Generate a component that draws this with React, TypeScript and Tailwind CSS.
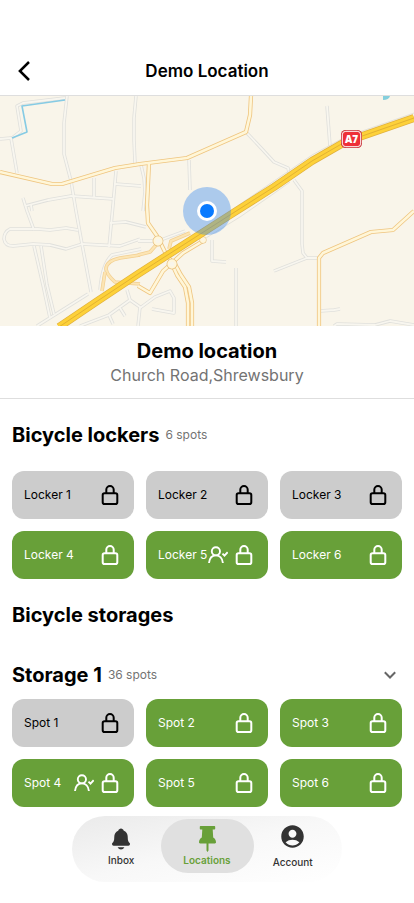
import React from "react";
import { IoNotifications } from "react-icons/io5";
import { MdAccountCircle } from "react-icons/md";

type Spot = { name: string; taken?: boolean; mine?: boolean };

const lockers: Spot[] = [
  { name: "Locker 1", taken: true },
  { name: "Locker 2", taken: true },
  { name: "Locker 3", taken: true },
  { name: "Locker 4" },
  { name: "Locker 5", mine: true },
  { name: "Locker 6" },
];

const spots: Spot[] = [
  { name: "Spot 1", taken: true },
  { name: "Spot 2" },
  { name: "Spot 3" },
  { name: "Spot 4", mine: true },
  { name: "Spot 5" },
  { name: "Spot 6" },
];

const lanes = [
  "M67 96L64 123V154L71 181L76 211L82 244L91 292",
  "M0 139L11 138L17 173",
  "M12 138L21 131L17 106L23 103L65 98",
  "M136 96L134 118V140L135 163",
  "M116 171L113 205L109 247",
  "M115 184L141 186",
  "M94 178V197",
  "M23 198L27 211L34 230",
  "M31 205L32 211",
  "M25 206L48 200L71 196L114 199",
  "M246 132L262 149L274 162L288 168L289 173",
  "M189 160L190 190",
  "M141 165L144 178L145 192L143 211",
  "M327 106L330 146",
  "M294 180L302 191V244L303 253L307 258L318 258",
  "M307 258L274 271",
  "M78 230L66 228L50 230L38 229L10 229Q4 232 4 239Q5 246 13 246L33 244L50 245L66 249L82 244L120 246L140 239",
  "M34 246L43 285L50 318",
  "M41 246L47 285L54 314",
  "M110 223L126 222L146 227",
  "M37 326L88 294",
  "M100 290Q102 264 112 255L141 249",
  "M80 326L109 315L130 300L127 290",
  "M109 315L113 324M120 308L125 316M130 300L140 307L138 326",
  "M140 308L155 297L170 291L174 298V313L152 309",
  "M212 240L212 261L226 262",
  "M236 268V326",
  "M320 311L334 310L340 309",
  "M334 326L337 324L375 325L390 321L414 325",
  "M138 241L158 241L185 231",
];

const streets = [
  "M0 172L52 184H62L115 168L140 164L187 158L246 132L250 115L251 96",
  "M149 163L147 205L148 223L157 236L166 254L172 262",
  "M319 326V258L323 253L371 232L393 230L414 211",
  "M203 241L183 253L172 263L163 271L150 293L138 286",
  "M172 264L177 275L185 287L188 303V326",
  "M175 264L181 275L189 287L192 303V326",
];

const ramps = [
  "M140 255L120 258Q106 261 106 269Q107 275 115 282L140 284",
  "M105 272L102 291",
  "M138 255L150 252L157 244",
  "M169 249L171 241L190 233",
];

const highway = "M59 327L96 302L138 274L230 215L274 187L312 161L345 142L414 118";

function Casing({ d, edge, fill, outer, inner }: { d: string; edge: string; fill: string; outer: number; inner: number }) {
  return (
    <>
      <path d={d} stroke={edge} strokeWidth={outer} />
      <path d={d} stroke={fill} strokeWidth={inner} />
    </>
  );
}

function LocationMap() {
  return (
    <svg
      className="block h-[230px] w-full"
      viewBox="0 96 414 230"
      preserveAspectRatio="xMidYMid slice"
      fill="none"
      strokeLinejoin="round"
      role="img"
      aria-label="Map of Church Road, Shrewsbury"
    >
      <rect y="96" width="414" height="230" fill="#f9f5ea" />
      <path d="M383 96H390Q389 100 383 100Z" fill="#84cfdd" />
      <g>
        {lanes.map((d) => (
          <path key={d} d={d} stroke="#e0e0dc" strokeWidth={3.4} />
        ))}
        {lanes.map((d) => (
          <path key={d} d={d} stroke="#f8f6ef" strokeWidth={1.8} />
        ))}
      </g>
      <path d="M65 100L22 106L27 132L12 138" stroke="#86cbe4" strokeWidth={1.6} />
      {ramps.map((d) => (
        <Casing key={d} d={d} edge="#f2cf91" fill="#fce5b4" outer={3.6} inner={2.2} />
      ))}
      <g>
        {streets.map((d) => (
          <path key={d} d={d} stroke="#efc57f" strokeWidth={4.2} />
        ))}
        {streets.map((d) => (
          <path key={d} d={d} stroke="#fff6d8" strokeWidth={2.6} />
        ))}
      </g>
      <g fill="#f9f5ea">
        <circle cx="158" cy="241" r="3.6" stroke="#e6bd78" strokeWidth={3.6} />
        <circle cx="158" cy="241" r="3.6" stroke="#fff6da" strokeWidth={2.2} />
        <circle cx="203" cy="240" r="2" stroke="#e6bd78" strokeWidth={3} />
        <circle cx="203" cy="240" r="2" stroke="#fff6da" strokeWidth={2} />
      </g>
      <path d="M230 211L274 181L312 155L345 137L414 113" stroke="#deddd6" strokeWidth={0.8} />
      <path d="M206 238L240 217L276 192L290 182" stroke="#deddd6" strokeWidth={0.8} />
      <path d={highway} stroke="#e0b03e" strokeWidth={8} />
      <path d={highway} stroke="#fdd13a" strokeWidth={6.6} />
      <path d={highway} stroke="#dfae32" strokeWidth={0.9} />
      <g fill="#f9f5ea">
        <circle cx="172" cy="264" r="3.6" stroke="#e6bd78" strokeWidth={3.6} />
        <circle cx="172" cy="264" r="3.6" stroke="#fff6da" strokeWidth={2.2} />
      </g>
      <circle cx="207" cy="211" r="24" fill="#3a8af0" fillOpacity="0.4" />
      <circle cx="207" cy="211" r="10" fill="#fff" />
      <circle cx="207" cy="211" r="7" fill="#087aff" />
      <rect x="341" y="130" width="21" height="18" rx="4.5" fill="#c9353b" />
      <rect x="342.300" y="131.300" width="18.400" height="15.400" rx="3.500" fill="#ee2f38" stroke="#fff" strokeWidth="1" />
      <text
        x="351.5"
        y="143"
        textAnchor="middle"
        fill="#fff"
        className="font-['Open_Sans',sans-serif] text-[10px] font-extrabold"
      >
        A7
      </text>
    </svg>
  );
}

function LockIcon() {
  return (
    <svg className="size-6 shrink-0" viewBox="0 0 24 24" fill="none" stroke="currentColor" strokeWidth="2" aria-hidden="true">
      <rect x="4.7" y="10.2" width="14.6" height="10.8" rx="1.8" />
      <path d="M8.3 10.2V6.7a3.7 3.7 0 0 1 7.4 0v3.5" />
    </svg>
  );
}

function UserCheckIcon() {
  return (
    <svg
      className="size-5 shrink-0"
      viewBox="0 0 20 20"
      fill="none"
      stroke="currentColor"
      strokeWidth="1.9"
      aria-hidden="true"
    >
      <circle cx="7.9" cy="6.300" r="4.100" />
      <path d="M1 18c.5-4.600 3.200-7.600 6.900-7.600s6.500 3 7 7.600" />
      <path d="M14.500 8.700l2 2 3.200-3.500" />
    </svg>
  );
}

function PinIcon() {
  return (
    <svg className="h-[26px] w-[17px]" viewBox="0 0 17 26" fill="currentColor" aria-hidden="true">
      <path d="M1.800 0h13.400c.7 0 1 .4 1 1v1.500c0 .6-.4 1-1 1h-1.500l.5 8c1.700 1 2.800 2.700 2.800 4.700 0 .7-.4 1.200-1.100 1.200H9.500v7L8.500 26l-1-1.600v-7H1.100C.4 17.400 0 16.900 0 16.200c0-2 1.100-3.700 2.800-4.700l.5-8H1.800c-.6 0-1-.4-1-1V1c0-.6.4-1 1-1z" />
    </svg>
  );
}

function SpotGrid({ items }: { items: Spot[] }) {
  return (
    <div className="grid grid-cols-3 gap-3">
      {items.map((item) => (
        <button
          key={item.name}
          type="button"
          className={`flex h-12 min-w-0 items-center justify-between rounded-xl px-3 text-xs ${
            item.taken ? "bg-[#cccccc] text-black" : "bg-[#68a039] text-white"
          }`}
        >
          <span className="whitespace-nowrap">{item.name}</span>
          <span className="flex items-center gap-1">
            {item.mine && <UserCheckIcon />}
            <LockIcon />
          </span>
        </button>
      ))}
    </div>
  );
}

export default function App() {
  return (
    <div className="flex min-h-screen flex-col bg-white font-['Inter',sans-serif] text-black">
      <header className="grid h-24 grid-cols-[48px_1fr_48px] items-center border-b border-[#dedede] pt-[46px]">
        <button type="button" aria-label="Back" className="flex h-10 items-center justify-center">
          <svg className="h-5 w-3" viewBox="0 0 12 20" fill="none" stroke="currentColor" strokeWidth="2.5" aria-hidden="true">
            <path d="M11 1L1.900 10l9.100 9" />
          </svg>
        </button>
        <h1 className="text-center text-[17px] leading-6 font-semibold">Demo Location</h1>
      </header>

      <LocationMap />

      <section className="border-b border-[#dedede] py-3 text-center">
        <h2 className="text-xl leading-[26px] font-bold">Demo location</h2>
        <p className="text-base leading-[22px] text-[#737373]">Church Road,Shrewsbury</p>
      </section>

      <main className="px-3 pt-6">
        <div className="mb-6 flex items-center gap-1.5">
          <h2 className="text-xl leading-6 font-bold">Bicycle lockers</h2>
          <span className="text-xs text-[#737373]">6 spots</span>
        </div>
        <SpotGrid items={lockers} />

        <h2 className="mt-6 text-xl leading-6 font-bold">Bicycle storages</h2>

        <div className="mt-9 mb-3 flex items-center gap-1.5">
          <h3 className="text-xl leading-6 font-bold">Storage 1</h3>
          <span className="text-xs text-[#737373]">36 spots</span>
          <button type="button" aria-label="Collapse Storage 1" className="ml-auto flex size-6 items-center justify-center text-[#666666]">
            <svg className="h-2 w-3" viewBox="0 0 12 8" fill="none" stroke="currentColor" strokeWidth="2" aria-hidden="true">
              <path d="M.8 1.300L6 6.500l5.200-5.200" />
            </svg>
          </button>
        </div>
        <SpotGrid items={spots} />
      </main>

      <nav
        aria-label="Main"
        className="mx-auto mt-[9px] mb-5 flex h-[66px] w-[270px] items-start rounded-full bg-linear-to-br from-[#eaeaea] via-[#f8f8f8] to-white px-2.5 pt-[3px] text-[10px] leading-3 font-medium text-[#333333]"
      >
        <a href="#inbox" className="flex h-[54px] flex-1 flex-col items-center pt-2">
          <IoNotifications className="size-6" />
          <span className="mt-[3px]">Inbox</span>
        </a>
        <a
          href="#locations"
          aria-current="page"
          className="flex h-[54px] w-[93px] flex-col items-center rounded-full bg-[#e0e0e0] pt-[7px] font-semibold text-[#68a039]"
        >
          <PinIcon />
          <span className="mt-[2px]">Locations</span>
        </a>
        <a href="#account" className="flex h-[54px] flex-1 flex-col items-center pt-1">
          <MdAccountCircle className="size-[27px]" />
          <span className="mt-[6px]">Account</span>
        </a>
      </nav>
    </div>
  );
}
